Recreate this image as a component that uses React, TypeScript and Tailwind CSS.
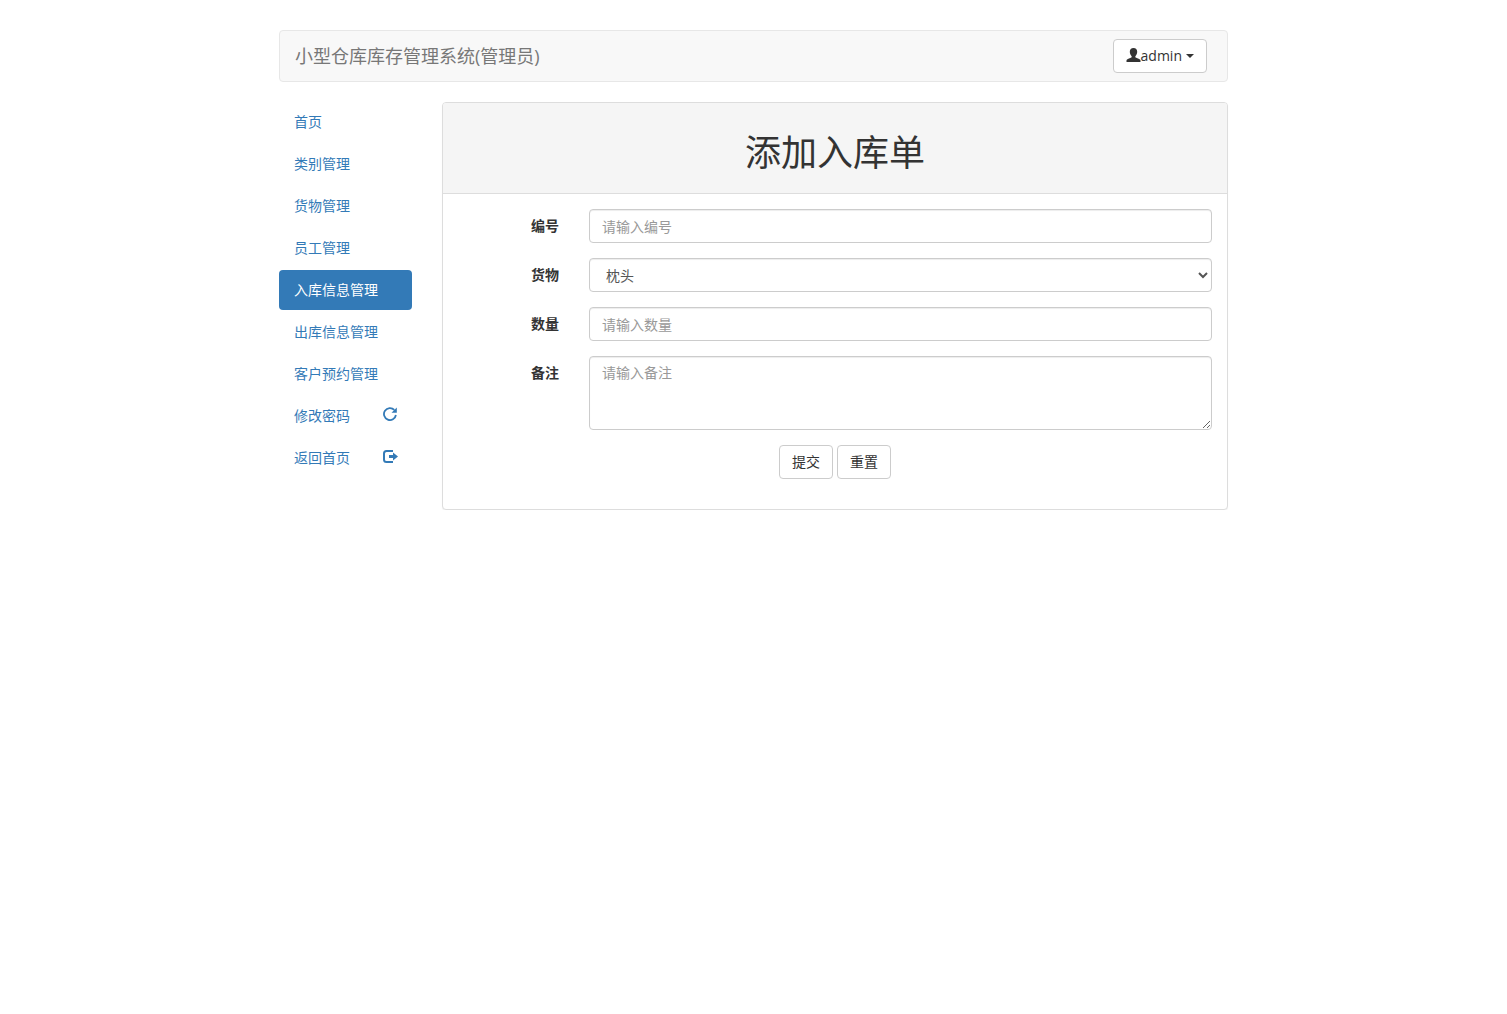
import React from 'react';
import { clsx } from 'clsx';

interface IconProps {
  className?: string;
}

function UserIcon({ className }: IconProps) {
  return (
    <svg viewBox="0 0 14 14" className={className} fill="currentColor" aria-hidden="true">
      <path d="M7 0C4.600 0 3.300 1.500 3.300 3.800c0 1.900.8 3.500 1.800 4.400.3.900 0 1.300-.8 1.600L1.300 11C.3 11.500 0 12 0 12.800V14h14v-1.200c0-.8-.3-1.300-1.300-1.800L9.700 9.800c-.8-.3-1.100-.7-.8-1.600 1-.9 1.800-2.500 1.800-4.400C10.700 1.500 9.400 0 7 0z" />
    </svg>
  );
}

function RepeatIcon({ className }: IconProps) {
  return (
    <svg viewBox="0 0 14 14" className={className} aria-hidden="true">
      <path d="M11.300 2.900A6 6 0 1 0 12.900 8" fill="none" stroke="currentColor" strokeWidth="1.800" />
      <path d="M13.800 0.500V5.800H8.500z" fill="currentColor" />
    </svg>
  );
}

function LogOutIcon({ className }: IconProps) {
  return (
    <svg viewBox="0 0 15 14" className={className} aria-hidden="true">
      <path
        d="M10 1.500H3.500Q1 1.500 1 4V10Q1 12.500 3.500 12.500H10"
        fill="none"
        stroke="currentColor"
        strokeWidth="2"
      />
      <path d="M6 5.500h4V3l5 4-5 4V8.500H6z" fill="currentColor" />
    </svg>
  );
}

interface NavItem {
  label: string;
  active?: boolean;
  icon?: React.ReactNode;
}

const navItems: NavItem[] = [
  { label: '首页' },
  { label: '类别管理' },
  { label: '货物管理' },
  { label: '员工管理' },
  { label: '入库信息管理', active: true },
  { label: '出库信息管理' },
  { label: '客户预约管理' },
  { label: '修改密码', icon: <RepeatIcon className="h-[14px] w-[14px] shrink-0" /> },
  { label: '返回首页', icon: <LogOutIcon className="h-[15px] w-[15px] shrink-0" /> },
];

const controlClass =
  'block w-full rounded border border-[#ccc] bg-white text-sm leading-5 text-[#555] shadow-[inset_0_1px_1px_rgba(0,0,0,0.075)] placeholder:text-[#999]';

const buttonClass =
  'rounded border border-[#ccc] bg-white px-3 py-[6px] text-sm leading-5 text-[#333] hover:bg-[#e6e6e6]';

function Navbar() {
  return (
    <nav className="mb-5 flex items-center justify-between rounded border border-[#e7e7e7] bg-[#f8f8f8] py-2 pr-5 pl-[15px]">
      <a href="#" className="text-lg leading-5 text-[#777]">
        小型仓库库存管理系统(管理员)
      </a>
      <button type="button" className={clsx(buttonClass, 'flex items-center')}>
        <UserIcon className="mb-[2px] h-[14px] w-[15px]" />
        admin
        <span className="ml-1 border-x-4 border-t-4 border-x-transparent border-t-[#333]" />
      </button>
    </nav>
  );
}

function Sidebar() {
  return (
    <ul className="flex w-[133px] shrink-0 flex-col gap-[2px]">
      {navItems.map((item) => (
        <li key={item.label}>
          <a
            href="#"
            className={clsx(
              'flex justify-between rounded px-[15px] py-[10px] text-sm leading-5',
              item.active ? 'bg-[#337ab7] text-white' : 'text-[#337ab7]'
            )}
          >
            {item.label}
            {item.icon && <span className="flex w-[14px] items-start pt-px">{item.icon}</span>}
          </a>
        </li>
      ))}
    </ul>
  );
}

interface FieldProps {
  id: string;
  label: string;
  children: React.ReactNode;
}

function Field({ id, label, children }: FieldProps) {
  return (
    <div className="mb-[15px] flex gap-[30px]">
      <label htmlFor={id} className="w-[101px] shrink-0 pt-[7px] text-right text-sm leading-5 font-bold text-[#333]">
        {label}
      </label>
      <div className="min-w-0 flex-1">{children}</div>
    </div>
  );
}

function StockInForm() {
  return (
    <section className="min-w-0 flex-1 rounded border border-[#ddd] bg-white shadow-[0_1px_1px_rgba(0,0,0,0.05)]">
      <header className="rounded-t-[3px] border-b border-[#ddd] bg-[#f5f5f5] px-[15px] pt-[30px] pb-5">
        <h1 className="text-center text-4xl leading-10 text-[#333]">添加入库单</h1>
      </header>
      <form className="p-[15px]">
        <Field id="code" label="编号">
          <input id="code" type="text" placeholder="请输入编号" className={clsx(controlClass, 'h-[34px] px-3 py-[6px]')} />
        </Field>
        <Field id="goods" label="货物">
          <select id="goods" className={clsx(controlClass, 'h-[34px] px-3 py-[6px]')}>
            <option>枕头</option>
          </select>
        </Field>
        <Field id="amount" label="数量">
          <input id="amount" type="text" placeholder="请输入数量" className={clsx(controlClass, 'h-[34px] px-3 py-[6px]')} />
        </Field>
        <Field id="remark" label="备注">
          <textarea id="remark" rows={3} placeholder="请输入备注" className={clsx(controlClass, 'px-3 py-[6px]')} />
        </Field>
        <div className="mb-[15px] flex justify-center gap-1">
          <button type="submit" className={buttonClass}>提交</button>
          <button type="reset" className={buttonClass}>重置</button>
        </div>
      </form>
    </section>
  );
}

export default function App() {
  return (
    <div className="mx-auto max-w-[949px] pt-[30px] font-['Open_Sans','Noto_Sans_CJK_SC',sans-serif] text-sm">
      <Navbar />
      <div className="flex items-start gap-[30px]">
        <Sidebar />
        <StockInForm />
      </div>
    </div>
  );
}
